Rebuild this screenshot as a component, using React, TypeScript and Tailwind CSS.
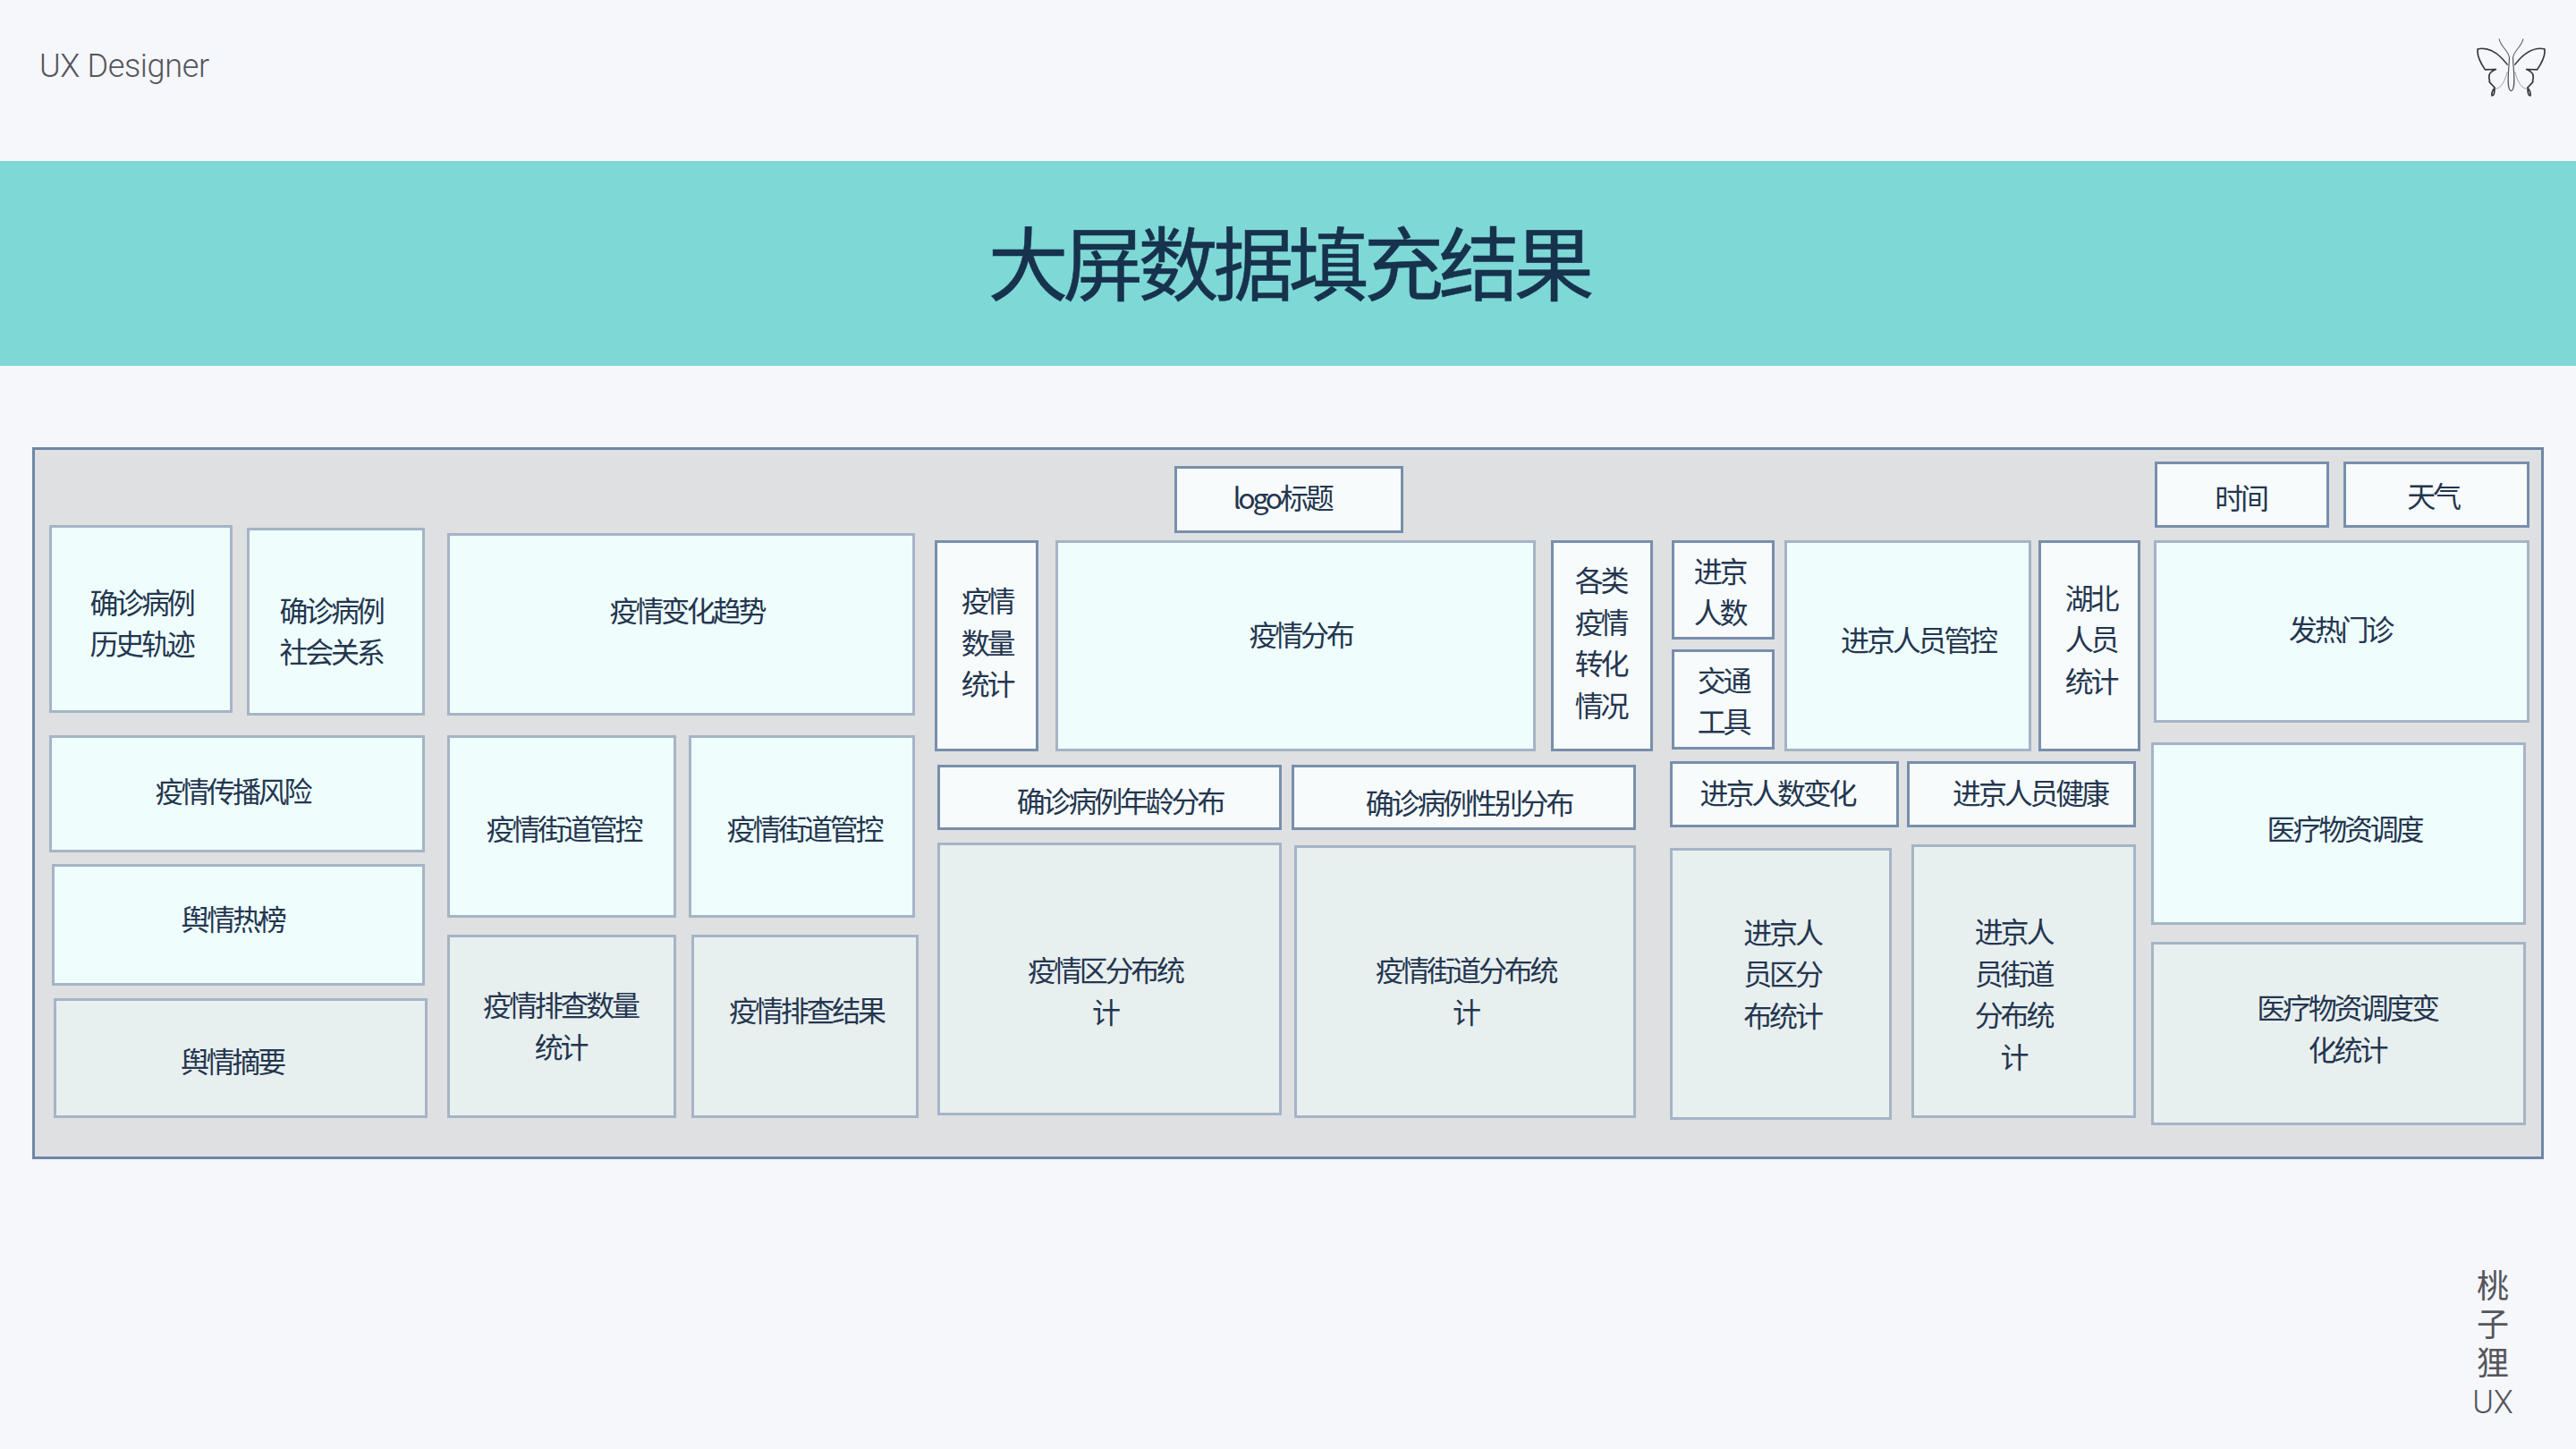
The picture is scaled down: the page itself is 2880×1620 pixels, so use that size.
import React from "react";

const tones = {
  cyan: "bg-[#effefd] border-[#a5b4c6]",
  white: "bg-[#f7fbfc] border-[#788fac]",
  gray: "bg-[#e8efef] border-[#a5b4c6]",
};

function Box({
  tone,
  className,
  children,
}: {
  tone: keyof typeof tones;
  className: string;
  children: React.ReactNode;
}) {
  return (
    <div className={`shrink-0 flex items-center justify-center text-center border-[3px] ${tones[tone]} ${className}`}>
      <div className="mr-[3px] mb-[4px]">{children}</div>
    </div>
  );
}

function Butterfly() {
  const wing = (
    <>
      <path d="M212 103C208 118 216 142 236 172L272 171C258 176 248 186 250 194C246 202 254 206 250 212C254 218 258 222 268 232C262 240 256 250 259 259C266 260 267 248 268 236" fill="none" stroke="#35353c" strokeWidth="5" strokeLinejoin="round" strokeLinecap="round" />
      <path d="M212 103C250 96 285 122 310 155" fill="none" stroke="#35353c" strokeWidth="4.5" strokeLinecap="round" />
      <path d="M268 236C288 238 302 212 310 180" fill="none" stroke="#777" strokeWidth="2" strokeLinecap="round" />
      <path d="M283 70C288 96 314 108 317 132" fill="none" stroke="#55555c" strokeWidth="3" strokeLinecap="round" />
      <path d="M317 132C316 170 305 240 323 243" fill="none" stroke="#55555c" strokeWidth="3.5" strokeLinecap="round" />
    </>
  );
  return (
    <svg viewBox="205 65 236 200" className="w-[79px] h-[67px]">
      {wing}
      <g transform="matrix(-1 0 0 1 646 0)">{wing}</g>
    </svg>
  );
}

export default function App() {
  return (
    <div className="w-full h-screen overflow-hidden bg-[#f5f7fb] text-[#24364f] font-['Noto_Sans_CJK_SC',sans-serif]">
      {/* Top bar */}
      <header className="h-[180px] flex items-start justify-between">
        <div className="pl-[44px] pt-[52px] text-[36px] leading-[44px] font-light tracking-[-0.35px] text-[#55555b] font-['Roboto',sans-serif]">UX Designer</div>
        <div className="pt-[42px] pr-[33px]">
          <Butterfly />
        </div>
      </header>

      {/* Title band */}
      <div className="h-[229px] bg-[#7ed8d5] flex items-center justify-center">
        <h1 className="pl-[1px] pb-[10px] text-[90px] leading-none font-normal tracking-[-6px] text-[#17324d] [-webkit-text-stroke:0.5px_#17324d]">大屏数据填充结果</h1>
      </div>

      {/* Wireframe panel */}
      <div className="mt-[91px] ml-[36px] w-[2808px] h-[796px] bg-[#dfe0e2] border-[3px] border-[#6f87a6] pl-[16px] flex items-start text-[32px] leading-[46.5px] tracking-[-3.2px]">
        {/* Column 1 */}
        <div className="mt-[84px] w-[423px] shrink-0 flex flex-col items-start">
          <div className="flex items-start">
            <Box tone="cyan" className="w-[205px] h-[210px] pl-[4px] pt-[10px]">确诊病例<br />历史轨迹</Box>
            <Box tone="cyan" className="ml-[16px] mt-[3px] w-[199px] h-[210px] pr-[8px] pt-[22px]">确诊病例<br />社会关系</Box>
          </div>
          <Box tone="cyan" className="mt-[22px] w-[420px] h-[131px] pr-[7px] pb-[5px]">疫情传播风险</Box>
          <Box tone="cyan" className="mt-[13px] ml-[3px] w-[417px] h-[136px] pr-[10px] pb-[12px]">舆情热榜</Box>
          <Box tone="gray" className="mt-[14px] ml-[5px] w-[418px] h-[134px] pr-[16px] pt-[9px]">舆情摘要</Box>
        </div>

        {/* Column 2 */}
        <div className="ml-[22px] mt-[93px] w-[527px] shrink-0 flex flex-col items-start">
          <Box tone="cyan" className="w-[523px] h-[204px] pl-[16px] pb-[30px]">疫情变化趋势</Box>
          <div className="mt-[22px] flex items-start">
            <Box tone="cyan" className="w-[256px] h-[204px] pl-[7px] pt-[6px]">疫情街道管控</Box>
            <Box tone="cyan" className="ml-[14px] w-[253px] h-[204px] pl-[8px] pt-[6px]">疫情街道管控</Box>
          </div>
          <div className="mt-[19px] flex items-start">
            <Box tone="gray" className="w-[256px] h-[205px]">疫情排查数量<br />统计</Box>
            <Box tone="gray" className="ml-[17px] w-[254px] h-[205px] pl-[6px] pb-[34px]">疫情排查结果</Box>
          </div>
        </div>

        {/* Column 3 */}
        <div className="ml-[18px] mt-[18px] w-[803px] shrink-0 flex flex-col items-start">
          <Box tone="white" className="ml-[268px] w-[256px] h-[75px] pr-[12px] pb-[2px]">logo标题</Box>
          <div className="mt-[8px] flex items-start">
            <Box tone="white" className="w-[116px] h-[236px] pl-[4px] pb-[6px]">疫情<br />数量<br />统计</Box>
            <Box tone="cyan" className="ml-[19px] w-[537px] h-[236px] pl-[14px] pb-[24px]">疫情分布</Box>
            <Box tone="white" className="ml-[17px] w-[114px] h-[236px] pb-[6px]">各类<br />疫情<br />转化<br />情况</Box>
          </div>
          <div className="mt-[15px] ml-[3px] flex items-start">
            <Box tone="white" className="w-[385px] h-[73px] pl-[26px] pt-[9px]">确诊病例年龄分布</Box>
            <Box tone="white" className="ml-[11px] w-[385px] h-[73px] pl-[14px] pt-[14px]">确诊病例性别分布</Box>
          </div>
          <div className="mt-[14px] ml-[3px] flex items-start">
            <Box tone="gray" className="w-[385px] h-[305px] pr-[7px] pt-[28px]">疫情区分布统<br />计</Box>
            <Box tone="gray" className="ml-[14px] mt-[3px] w-[382px] h-[305px] pl-[4px] pt-[22px]">疫情街道分布统<br />计</Box>
          </div>
        </div>

        {/* Column 4 */}
        <div className="ml-[19px] mt-[101px] w-[526px] shrink-0 flex flex-col items-start">
          <div className="ml-[2px] flex items-start">
            <div className="shrink-0 flex flex-col">
              <Box tone="white" className="w-[115px] h-[111px] pr-[5px] pt-[5px]">进京<br />人数</Box>
              <Box tone="white" className="mt-[11px] w-[115px] h-[112px] pl-[3px] pt-[4px]">交通<br />工具</Box>
            </div>
            <Box tone="cyan" className="ml-[11px] w-[276px] h-[236px] pl-[26px] pb-[12px]">进京人员管控</Box>
            <Box tone="white" className="ml-[8px] w-[114px] h-[236px] pl-[6px] pb-[13px]">湖北<br />人员<br />统计</Box>
          </div>
          <div className="mt-[11px] flex items-start">
            <Box tone="white" className="w-[256px] h-[74px] pr-[13px] pb-[2px]">进京人数变化</Box>
            <Box tone="white" className="ml-[9px] w-[256px] h-[74px] pl-[22px] pb-[2px]">进京人员健康</Box>
          </div>
          <div className="mt-[19px] flex items-start">
            <Box tone="gray" className="mt-[4px] w-[248px] h-[304px] pl-[6px] pb-[21px]">进京人<br />员区分<br />布统计</Box>
            <Box tone="gray" className="ml-[22px] w-[251px] h-[306px] pr-[20px] pt-[30px]">进京人<br />员街道<br />分布统<br />计</Box>
          </div>
        </div>

        {/* Column 5 */}
        <div className="ml-[12px] mt-[13px] w-[423px] shrink-0 flex flex-col items-start">
          <div className="ml-[4px] flex items-start">
            <Box tone="white" className="w-[195px] h-[74px] pt-[9px]">时间</Box>
            <Box tone="white" className="ml-[16px] w-[208px] h-[74px] pr-[5px] pt-[4px]">天气</Box>
          </div>
          <Box tone="cyan" className="mt-[14px] ml-[3px] w-[420px] h-[204px] pb-[4px]">发热门诊</Box>
          <Box tone="cyan" className="mt-[22px] w-[419px] h-[204px] pl-[16px] pb-[9px]">医疗物资调度</Box>
          <Box tone="gray" className="mt-[19px] w-[419px] h-[205px] pl-[22px] pb-[10px]">医疗物资调度变<br />化统计</Box>
        </div>
      </div>

      {/* Signature */}
      <div className="mt-[118px] pr-[63px] flex justify-end">
        <div className="w-[60px] text-center text-[36px] leading-[43px] text-[#55555b]">
          桃<br />子<br />狸<br /><span className="font-light font-['Roboto',sans-serif]">UX</span>
        </div>
      </div>
    </div>
  );
}
